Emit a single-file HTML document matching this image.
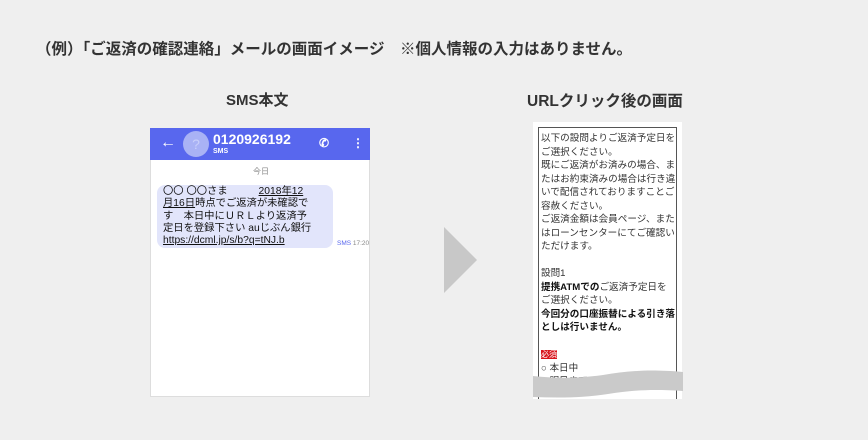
<!DOCTYPE html><html><head><meta charset="utf-8"><style>
body{margin:0;width:868px;height:440px;background:#efefef;font-family:"Liberation Sans","Noto Sans CJK JP",sans-serif;position:relative;overflow:hidden;color:#222}
.a{position:absolute;white-space:nowrap}
</style></head><body>
<div class="a" style="left:36px;top:37px;font-size:15.5px;font-weight:bold;color:#333">（例）「ご返済の確認連絡」メールの画面イメージ　※個人情報の入力はありません。</div>
<div class="a" style="left:226px;top:89px;font-size:15px;font-weight:bold;color:#333">SMS本文</div>
<div class="a" style="left:527px;top:89px;font-size:15.5px;font-weight:bold;color:#333">URLクリック後の画面</div>

<div class="a" style="left:150px;top:128px;width:220px;height:269px;background:#fff;border:1px solid #ddd;box-sizing:border-box"></div>
<div class="a" style="left:150px;top:128px;width:220px;height:32px;background:#5867ee"></div>
<div class="a" style="left:160px;top:134px;color:#fff;font-size:16px;font-weight:bold">←</div>
<div class="a" style="left:183px;top:131px;width:26px;height:26px;border-radius:50%;background:#a9b2f5;color:#c9cffa;font-size:14px;text-align:center;line-height:26px">?</div>
<div class="a" style="left:213px;top:131px;color:#fff;font-size:14px;font-weight:bold">0120926192</div>
<div class="a" style="left:213px;top:148px;color:#fff;font-size:7px;font-weight:bold">SMS</div>
<div class="a" style="left:319px;top:136px;color:#fff;font-size:12px;font-weight:bold">✆</div>
<div class="a" style="left:352px;top:136px;color:#fff;font-size:12px;font-weight:bold">⋮</div>
<div class="a" style="left:253px;top:166px;color:#888;font-size:8px">今日</div>
<div class="a" style="left:157px;top:185px;width:176px;height:63px;background:#e2e5fb;border-radius:8px"></div>
<div class="a" style="left:163px;top:186px;font-size:10.3px;line-height:12.3px;color:#111">〇〇 〇〇さま　　　<u>2018年12</u><br><u>月16日</u>時点でご返済が未確認で<br>す　本日中にＵＲＬより返済予<br>定日を登録下さい auじぶん銀行<br><u>https://dcml.jp/s/b?q=tNJ.b</u></div>
<div class="a" style="left:337px;top:240px;font-size:6.5px;color:#888"><span style="color:#5867ee">SMS</span> 17:20</div>

<svg class="a" style="left:444px;top:227px" width="34" height="66"><polygon points="0,0 33,33 0,66" fill="#c8c8c8"/></svg>

<div class="a" style="left:533px;top:122px;width:149px;height:277px;background:#fff"></div>
<div class="a" style="left:538px;top:127px;width:139px;height:272px;border:1px solid #555;border-bottom:none;box-sizing:border-box"></div>
<div class="a" style="left:541px;top:132px;font-size:9.6px;line-height:13.5px;color:#333">以下の設問よりご返済予定日を<br>ご選択ください。<br>既にご返済がお済みの場合、ま<br>たはお約束済みの場合は行き違<br>いで配信されておりますことご<br>容赦ください。<br>ご返済金額は会員ページ、また<br>はローンセンターにてご確認い<br>ただけます。<br><br>設問1<br><b style="color:#111">提携ATMでの</b>ご返済予定日を<br>ご選択ください。<br><b style="color:#111">今回分の口座振替による引き落<br>とし</b><b style="color:#111">は行いません。</b><br><br><span style="background:#d8141c;color:#fff;font-size:8px">必須</span><br>○ 本日中<br>○ 明日まで</div>
<svg class="a" style="left:533px;top:365px" width="150" height="35"><path d="M0,11 C20,13 40,14 70,10 C95,6 115,4 150,7 L150,26 C120,24 100,25 75,29 C50,33 25,33 0,32 Z" fill="#cacaca"/></svg>
</body></html>
